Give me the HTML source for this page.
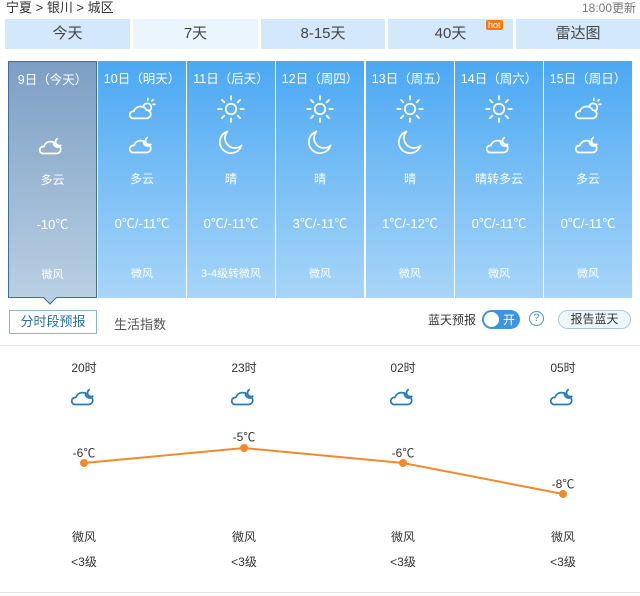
<!DOCTYPE html>
<html><head><meta charset="utf-8"><style>
*{margin:0;padding:0;box-sizing:border-box}
body{width:640px;height:596px;background:#fff;font-family:"Liberation Sans","Noto Sans CJK SC",sans-serif;position:relative;overflow:hidden;color:#333}
.abs{position:absolute}
.crumb{left:6px;top:0;font-size:13px;color:#333;line-height:16px}
.upd{right:4px;top:0;font-size:12px;color:#777;line-height:16px}
.tab{top:19px;height:30px;background:#d3e9fb;font-size:15px;color:#444;text-align:center;line-height:30px}
.card{top:61px;height:237px;width:88px;background:linear-gradient(#4ba8f3,#a8d5f8);color:#fff;text-align:center;font-size:12px}
.card.sel{background:linear-gradient(#7c9fc4,#b9cfe3);border:1px solid #3d6f9b}
.card .d{position:absolute;top:7px;left:0;right:0;font-size:12.5px}
.card .i1{position:absolute;top:34px;left:30px}
.card .i2{position:absolute;top:67px;left:30px}
.card .w{position:absolute;top:109px;left:0;right:0}
.card .t{position:absolute;top:152px;left:0;right:0;font-size:13px}
.card .f{position:absolute;top:204px;left:0;right:0;font-size:11px}
.hr{left:0;width:640px;height:1px;background:#e5e5e5}
.lbl{font-size:12px;color:#333;text-align:center;width:60px}
</style></head><body>
<svg width="0" height="0" style="position:absolute">
<defs>
<symbol id="sun" viewBox="0 0 24 24"><g fill="none" stroke="#fff" stroke-width="1.5" stroke-linecap="round"><circle cx="12" cy="12" r="4.5"/><path d="M12 1v3M12 20v3M1 12h3M20 12h3M4.2 4.2l2.1 2.1M17.7 17.7l2.1 2.1M4.2 19.8l2.1-2.1M17.7 6.3l2.1-2.1"/></g></symbol>
<symbol id="moon" viewBox="0 0 24 24"><path d="M9 3a9.5 9.5 0 1 0 12 12a8.5 8.5 0 0 1-12-12z" fill="none" stroke="#fff" stroke-width="1.5" stroke-linejoin="round"/></symbol>
<symbol id="cs" viewBox="0 0 24 24"><g fill="none" stroke="#fff" stroke-width="1.5" stroke-linecap="round"><path d="M4 20h12a3.5 3.5 0 0 0 0-7a6 6 0 0 0-11 1a3 3 0 0 0-1 6z"/><path d="M13 10a3.5 3.5 0 1 1 5.5 3.5"/><path d="M17 3v1.5M23 8h-1.5M21.5 4l-1 1"/></g></symbol>
<symbol id="cm" viewBox="0 0 24 24"><g fill="none" stroke="#fff" stroke-width="1.5" stroke-linejoin="round"><path d="M4 21h12a3.5 3.5 0 0 0 0-7a6 6 0 0 0-11 1a3 3 0 0 0-1 6z"/><path d="M13.5 10.5a3.5 3.5 0 0 0 6 3.5a3 3 0 0 1-2.5-6"/></g></symbol>
<symbol id="cmb" viewBox="0 0 24 24"><g fill="none" stroke="#2a7ab8" stroke-width="1.5" stroke-linejoin="round"><path d="M4 21h12a3.5 3.5 0 0 0 0-7a6 6 0 0 0-11 1a3 3 0 0 0-1 6z"/><path d="M13.5 10.5a3.5 3.5 0 0 0 6 3.5a3 3 0 0 1-2.5-6"/></g></symbol>
</defs></svg>

<div class="abs crumb">宁夏 &gt; 银川 &gt; 城区</div>
<div class="abs upd">18:00更新</div>
<div class="abs tab" style="left:5px;width:125px">今天</div>
<div class="abs tab" style="left:133px;width:125px;background:#eaf5fd">7天</div>
<div class="abs tab" style="left:261px;width:124px">8-15天</div>
<div class="abs tab" style="left:388px;width:125px">40天</div>
<div class="abs" style="left:486px;top:20px;background:#f07a1a;color:#fff;font-size:9px;line-height:10px;padding:0 2px;border-radius:2px">hot</div>
<div class="abs tab" style="left:516px;width:124px">雷达图</div>

<div class="abs card sel" style="left:8px;width:89px"><div class="d">9日（今天）</div><svg class="i2" width="28" height="28" style="left:29px"><use href="#cm"/></svg><div class="w">多云</div><div class="t">-10℃</div><div class="f">微风</div></div>
<div class="abs card" style="left:98px"><div class="d">10日（明天）</div><svg class="i1" width="28" height="28"><use href="#cs"/></svg><svg class="i2" width="28" height="28"><use href="#cm"/></svg><div class="w">多云</div><div class="t">0℃/-11℃</div><div class="f">微风</div></div>
<div class="abs card" style="left:187px"><div class="d">11日（后天）</div><svg class="i1" width="28" height="28"><use href="#sun"/></svg><svg class="i2" width="28" height="28"><use href="#moon"/></svg><div class="w">晴</div><div class="t">0℃/-11℃</div><div class="f">3-4级转微风</div></div>
<div class="abs card" style="left:276px"><div class="d">12日（周四）</div><svg class="i1" width="28" height="28"><use href="#sun"/></svg><svg class="i2" width="28" height="28"><use href="#moon"/></svg><div class="w">晴</div><div class="t">3℃/-11℃</div><div class="f">微风</div></div>
<div class="abs card" style="left:366px"><div class="d">13日（周五）</div><svg class="i1" width="28" height="28"><use href="#sun"/></svg><svg class="i2" width="28" height="28"><use href="#moon"/></svg><div class="w">晴</div><div class="t">1℃/-12℃</div><div class="f">微风</div></div>
<div class="abs card" style="left:455px"><div class="d">14日（周六）</div><svg class="i1" width="28" height="28"><use href="#sun"/></svg><svg class="i2" width="28" height="28"><use href="#cm"/></svg><div class="w">晴转多云</div><div class="t">0℃/-11℃</div><div class="f">微风</div></div>
<div class="abs card" style="left:544px"><div class="d">15日（周日）</div><svg class="i1" width="28" height="28"><use href="#cs"/></svg><svg class="i2" width="28" height="28"><use href="#cm"/></svg><div class="w">多云</div><div class="t">0℃/-11℃</div><div class="f">微风</div></div>

<svg class="abs" style="left:43px;top:297px" width="14" height="8"><path d="M0 0L7 7L14 0" fill="#b9cfe3" stroke="#3d6f9b"/></svg>
<div class="abs" style="left:9px;top:310px;width:88px;height:24px;border:1px solid #8cb4d4;font-size:13px;color:#2a6fa8;text-align:center;line-height:22px">分时段预报</div>
<div class="abs" style="left:114px;top:314px;font-size:13px;color:#555">生活指数</div>
<div class="abs" style="left:428px;top:311px;font-size:12px;color:#333">蓝天预报</div>
<div class="abs" style="left:482px;top:310px;width:38px;height:19px;border-radius:10px;background:#3d95e0"><div style="position:absolute;left:2px;top:2px;width:15px;height:15px;border-radius:50%;background:#fff"></div><span style="position:absolute;left:21px;top:1px;font-size:12px;color:#fff">开</span></div>
<div class="abs" style="left:529px;top:311px;width:15px;height:15px;border:1px solid #4a96d6;border-radius:50%;font-size:11px;color:#4a96d6;text-align:center;line-height:13px">?</div>
<div class="abs" style="left:558px;top:310px;width:73px;height:19px;border:1px solid #a9c9e3;border-radius:10px;background:#eef6fd;font-size:12px;text-align:center;line-height:17px;color:#333">报告蓝天</div>
<div class="abs hr" style="top:345px"></div>
<div class="abs hr" style="top:592px"></div>

<div class="abs lbl" style="left:54px;top:359px">20时</div>
<div class="abs lbl" style="left:214px;top:359px">23时</div>
<div class="abs lbl" style="left:373px;top:359px">02时</div>
<div class="abs lbl" style="left:533px;top:359px">05时</div>
<svg class="abs" style="left:70px;top:380px" width="28" height="28"><use href="#cmb"/></svg>
<svg class="abs" style="left:230px;top:380px" width="28" height="28"><use href="#cmb"/></svg>
<svg class="abs" style="left:389px;top:380px" width="28" height="28"><use href="#cmb"/></svg>
<svg class="abs" style="left:549px;top:380px" width="28" height="28"><use href="#cmb"/></svg>

<svg class="abs" style="left:0;top:0" width="640" height="596"><polyline points="84,463 244,448 403,463 563,494" fill="none" stroke="#f08a2c" stroke-width="2"/><g fill="#f08a2c"><circle cx="84" cy="463" r="4"/><circle cx="244" cy="448" r="4"/><circle cx="403" cy="463" r="4"/><circle cx="563" cy="494" r="4"/></g></svg>
<div class="abs lbl" style="left:54px;top:444px">-6℃</div>
<div class="abs lbl" style="left:214px;top:428px">-5℃</div>
<div class="abs lbl" style="left:373px;top:444px">-6℃</div>
<div class="abs lbl" style="left:533px;top:475px">-8℃</div>

<div class="abs lbl" style="left:54px;top:528px">微风</div>
<div class="abs lbl" style="left:214px;top:528px">微风</div>
<div class="abs lbl" style="left:373px;top:528px">微风</div>
<div class="abs lbl" style="left:533px;top:528px">微风</div>
<div class="abs lbl" style="left:54px;top:553px">&lt;3级</div>
<div class="abs lbl" style="left:214px;top:553px">&lt;3级</div>
<div class="abs lbl" style="left:373px;top:553px">&lt;3级</div>
<div class="abs lbl" style="left:533px;top:553px">&lt;3级</div>
</body></html>
